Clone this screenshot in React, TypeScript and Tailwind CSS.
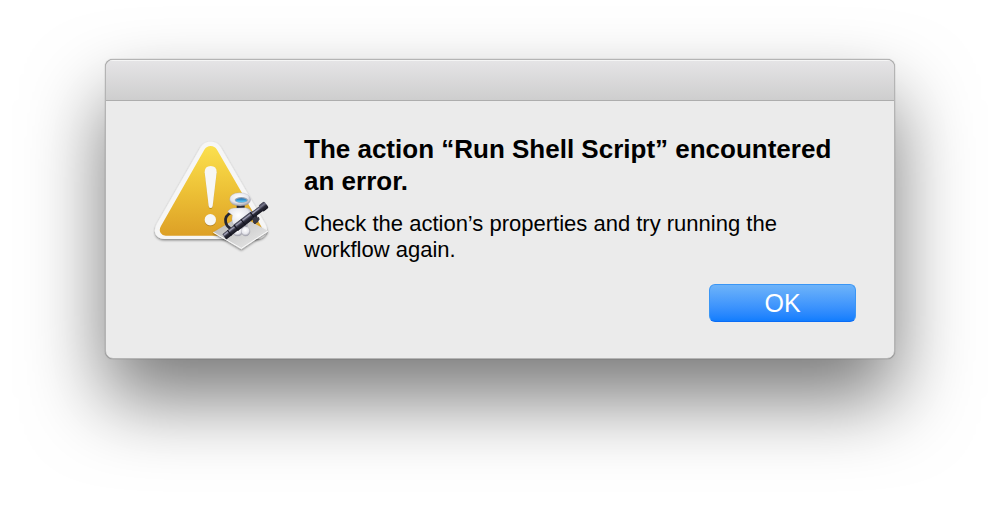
function AlertIcon() {
  return (
    <svg
      className="mt-0.5 h-[120px] w-[125px] shrink-0"
      viewBox="30 30 375 360"
      role="img"
      aria-label="Automator warning"
    >
      <defs>
        <linearGradient id="yellow" x1="0" y1="0" x2="0" y2="1">
          <stop offset="0" stopColor="#fbe04e" />
          <stop offset="0.5" stopColor="#edc136" />
          <stop offset="1" stopColor="#dda026" />
        </linearGradient>
        <linearGradient id="paper" x1="0" y1="0" x2="1" y2="1">
          <stop offset="0" stopColor="#b4b4b4" />
          <stop offset="1" stopColor="#ededed" />
        </linearGradient>
        <radialGradient id="shell" cx="0.45" cy="0.35" r="0.7">
          <stop offset="0" stopColor="#ffffff" />
          <stop offset="0.6" stopColor="#e6e6ec" />
          <stop offset="1" stopColor="#888896" />
        </radialGradient>
        <linearGradient id="visor" x1="0" y1="0" x2="0" y2="1">
          <stop offset="0" stopColor="#1d6fb4" />
          <stop offset="1" stopColor="#63d0fb" />
        </linearGradient>
        <linearGradient id="tube" x1="0" y1="0" x2="0" y2="1">
          <stop offset="0" stopColor="#3a3a4a" />
          <stop offset="0.3" stopColor="#77778c" />
          <stop offset="0.55" stopColor="#2a2a38" />
          <stop offset="1" stopColor="#15151f" />
        </linearGradient>
        <filter id="soft" x="-10%" y="-10%" width="120%" height="125%">
          <feDropShadow dx="0" dy="4" stdDeviation="3" floodOpacity="0.45" />
        </filter>
        <filter id="markShadow" x="-20%" y="-10%" width="140%" height="120%">
          <feDropShadow dx="0" dy="3" stdDeviation="2" floodColor="#8a6100" floodOpacity="0.5" />
        </filter>
      </defs>

      <path
        d="M182 66 Q192 50 212 50 Q232 50 242 66 L376 297 Q386 316 376 330 Q367 342 350 342 L74 342 Q57 342 48 330 Q40 316 50 297 Z"
        fill="#f6f6f6"
        filter="url(#soft)"
      />
      <path
        d="M193 74 Q200 63 212 63 Q224 63 231 74 L363 303 Q370 315 363 324 Q357 332 347 332 L77 332 Q67 332 62 324 Q56 315 63 303 Z"
        fill="url(#yellow)"
      />
      <g fill="#f7f7f5" filter="url(#markShadow)">
        <path d="M194 142 Q194 123 212 123 Q230 123 230 142 L218 242 Q217 249 212 249 Q207 249 206 242 Z" />
        <circle cx="211" cy="284" r="17" />
      </g>

      <g filter="url(#soft)">
        <path d="M220 322 L302 272 L384 318 L304 373 Z" fill="url(#paper)" />
        <path d="M220 322 L304 370 L384 318" fill="none" stroke="#fafafa" strokeWidth="3" />
      </g>

      <path d="M276 262 Q253 272 257 291 Q259 303 269 309" fill="none" stroke="#242431" strokeWidth="8" strokeLinecap="round" />
      <path d="M329 261 Q348 265 349 280 L345 293" fill="none" stroke="#30303c" strokeWidth="8" strokeLinecap="round" />
      <path d="M290 236 h24 v17 h-24 z" fill="#20202b" />
      <g stroke="#a2a2ac" strokeWidth="1">
        <path d="M263 259 Q272 247 290 249 L316 248 Q331 250 336 263 Q328 268 326 285 L321 306 Q302 318 285 307 Q273 293 277 270 Q268 266 263 259 Z" fill="url(#shell)" />
        <ellipse cx="293" cy="319" rx="15" ry="14" fill="url(#shell)" />
        <ellipse cx="317" cy="319" rx="13" ry="14" fill="url(#shell)" />
        <path d="M269 224 Q269 204 299 203 Q329 204 332 224 Q330 242 301 243 Q271 242 269 224 Z" fill="url(#shell)" />
      </g>
      <ellipse cx="304" cy="225" rx="20" ry="9" fill="#9ba5b5" />
      <ellipse cx="304" cy="226" rx="17" ry="6" fill="url(#visor)" />

      <g transform="translate(316 287) rotate(-37.5)">
        <rect x="-80" y="-10" width="47" height="20" rx="3" fill="url(#tube)" />
        <rect x="-36" y="-12" width="64" height="23" rx="3" fill="url(#tube)" />
        <rect x="24" y="-9" width="39" height="18" rx="2" fill="url(#tube)" />
        <rect x="58" y="-12" width="22" height="24" rx="5" fill="url(#tube)" />
        <path d="M-76 -5 H-40 M-30 -6 H22 M30 -4 H54" stroke="#a4a4b8" strokeWidth="3" />
        <path d="M-60 -10 V10 M-35 -11 V11 M-8 -11 V11 M27 -11 V11" stroke="#141420" strokeWidth="3" />
      </g>
      <path d="M337 281 l8 -7 l4 6 l7 -5 l3 8 l-7 10 l-12 1 z" fill="#393945" />
    </svg>
  );
}

export default function App() {
  return (
    <main className="min-h-screen overflow-hidden bg-white px-[105px] pt-[59px] pb-[150px] font-['Liberation_Sans',Arial,sans-serif] text-black">
      <section
        role="alertdialog"
        aria-labelledby="alert-title"
        aria-describedby="alert-message"
        className="overflow-hidden rounded-lg border border-[#b4b4b4] bg-[#ebebeb] shadow-[0_0_1px_rgba(0,0,0,0.5),0_40px_78px_rgba(0,0,0,0.53)]"
      >
        <header className="h-[41px] border-t border-b border-t-[#f5f5f5] border-b-[#adadad] bg-linear-to-b from-[#e5e4e6] to-[#cecece]" />

        <div className="flex gap-[29px] pt-8 pr-[38px] pb-9 pl-11">
          <AlertIcon />
          <div className="flex flex-1 flex-col">
            <h1 id="alert-title" className="text-[26px] leading-8 font-bold">
              The action “Run Shell Script” encountered an error.
            </h1>
            <p id="alert-message" className="mt-[14px] pr-8 text-[22px] leading-[26px]">
              Check the action’s properties and try running the workflow again.
            </p>
            <button
              type="button"
              className="mt-[21px] h-[38px] w-[147px] self-end rounded-md border border-[#3a96f5] border-b-[#0a6cf5] bg-linear-to-b from-[#6db3f9] to-[#107dfe] text-[25px] leading-9 text-white"
            >
              OK
            </button>
          </div>
        </div>
      </section>
    </main>
  );
}
